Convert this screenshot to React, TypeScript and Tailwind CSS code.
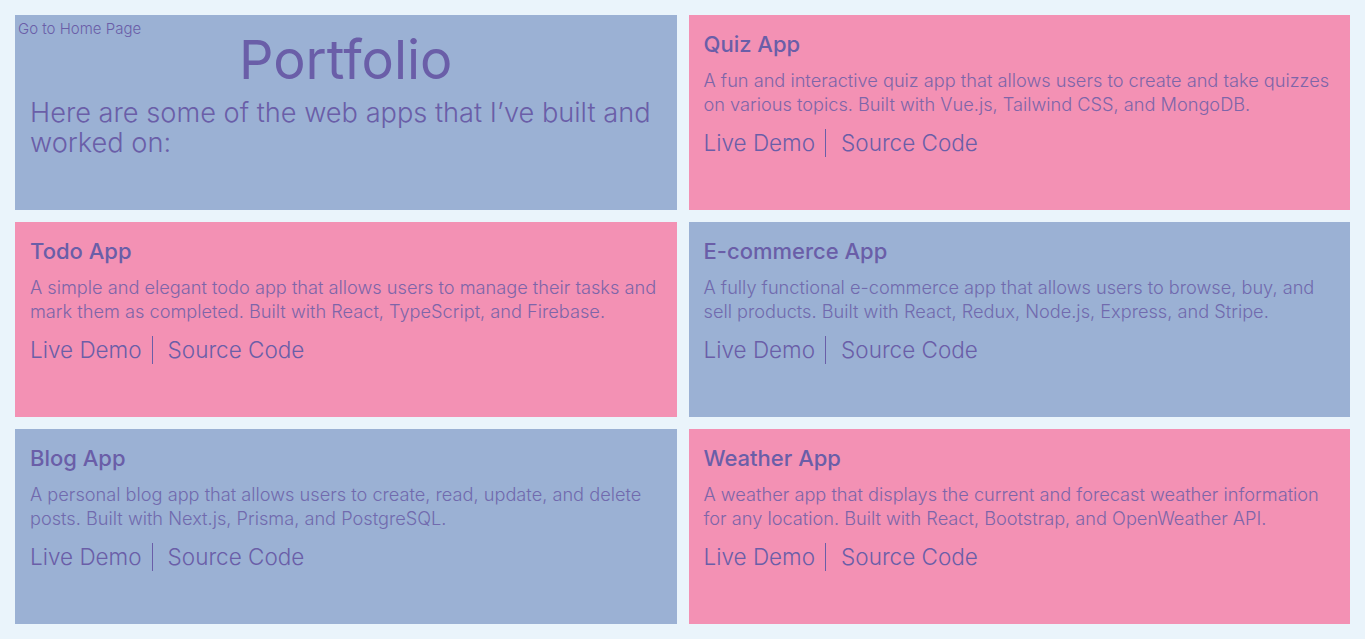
import React from "react";

const projects = [
  {
    title: "Quiz App",
    desc: "A fun and interactive quiz app that allows users to create and take quizzes on various topics. Built with Vue.js, Tailwind CSS, and MongoDB.",
    pink: true,
  },
  {
    title: "Todo App",
    desc: "A simple and elegant todo app that allows users to manage their tasks and mark them as completed. Built with React, TypeScript, and Firebase.",
    pink: true,
  },
  {
    title: "E-commerce App",
    desc: "A fully functional e-commerce app that allows users to browse, buy, and sell products. Built with React, Redux, Node.js, Express, and Stripe.",
    pink: false,
  },
  {
    title: "Blog App",
    desc: "A personal blog app that allows users to create, read, update, and delete posts. Built with Next.js, Prisma, and PostgreSQL.",
    pink: false,
  },
  {
    title: "Weather App",
    desc: "A weather app that displays the current and forecast weather information for any location. Built with React, Bootstrap, and OpenWeather API.",
    pink: true,
  },
];

function Card({ title, desc, pink }: { title: string; desc: string; pink: boolean }) {
  return (
    <div className={`${pink ? "bg-[#f391b4]" : "bg-[#9bb1d4]"} h-[195px] px-[15px] pt-[13px]`}>
      <h2 className="text-[22px] leading-[32px] font-medium text-[#6a5ea8]">{title}</h2>
      <p className="mt-[8px] text-[18.2px] leading-[24px] font-light text-[#6a5ea8] opacity-85">{desc}</p>
      <div className="mt-[13px] flex items-center text-[22.5px] leading-[28px] font-light text-[#6a5ea8]">
        <a className="pr-[10px] border-r border-[#6a5ea8]">Live Demo</a>
        <a className="pl-[15px]">Source Code</a>
      </div>
    </div>
  );
}

export default function App() {
  return (
    <div
      className="min-h-[639px] bg-[#eaf4fb] p-[15px]"
      style={{ fontFamily: "Inter, 'Noto Sans', sans-serif" }}
    >
      <div className="grid grid-cols-2 gap-[12px]">
        <div className="relative bg-[#9bb1d4] h-[195px] px-[15px] pt-[10px]">
          <a className="absolute left-[3px] top-[4px] text-[15px] leading-[20px] font-light text-[#6a5ea8]">
            Go to Home Page
          </a>
          <h1 className="text-center text-[54px] leading-[70px] text-[#6a5ea8]">Portfolio</h1>
          <p className="mt-[3px] text-[27.2px] leading-[30px] font-light text-[#6a5ea8]">
            Here are some of the web apps that I’ve built and worked on:
          </p>
        </div>
        {projects.map((p) => (
          <Card key={p.title} {...p} />
        ))}
      </div>
    </div>
  );
}
